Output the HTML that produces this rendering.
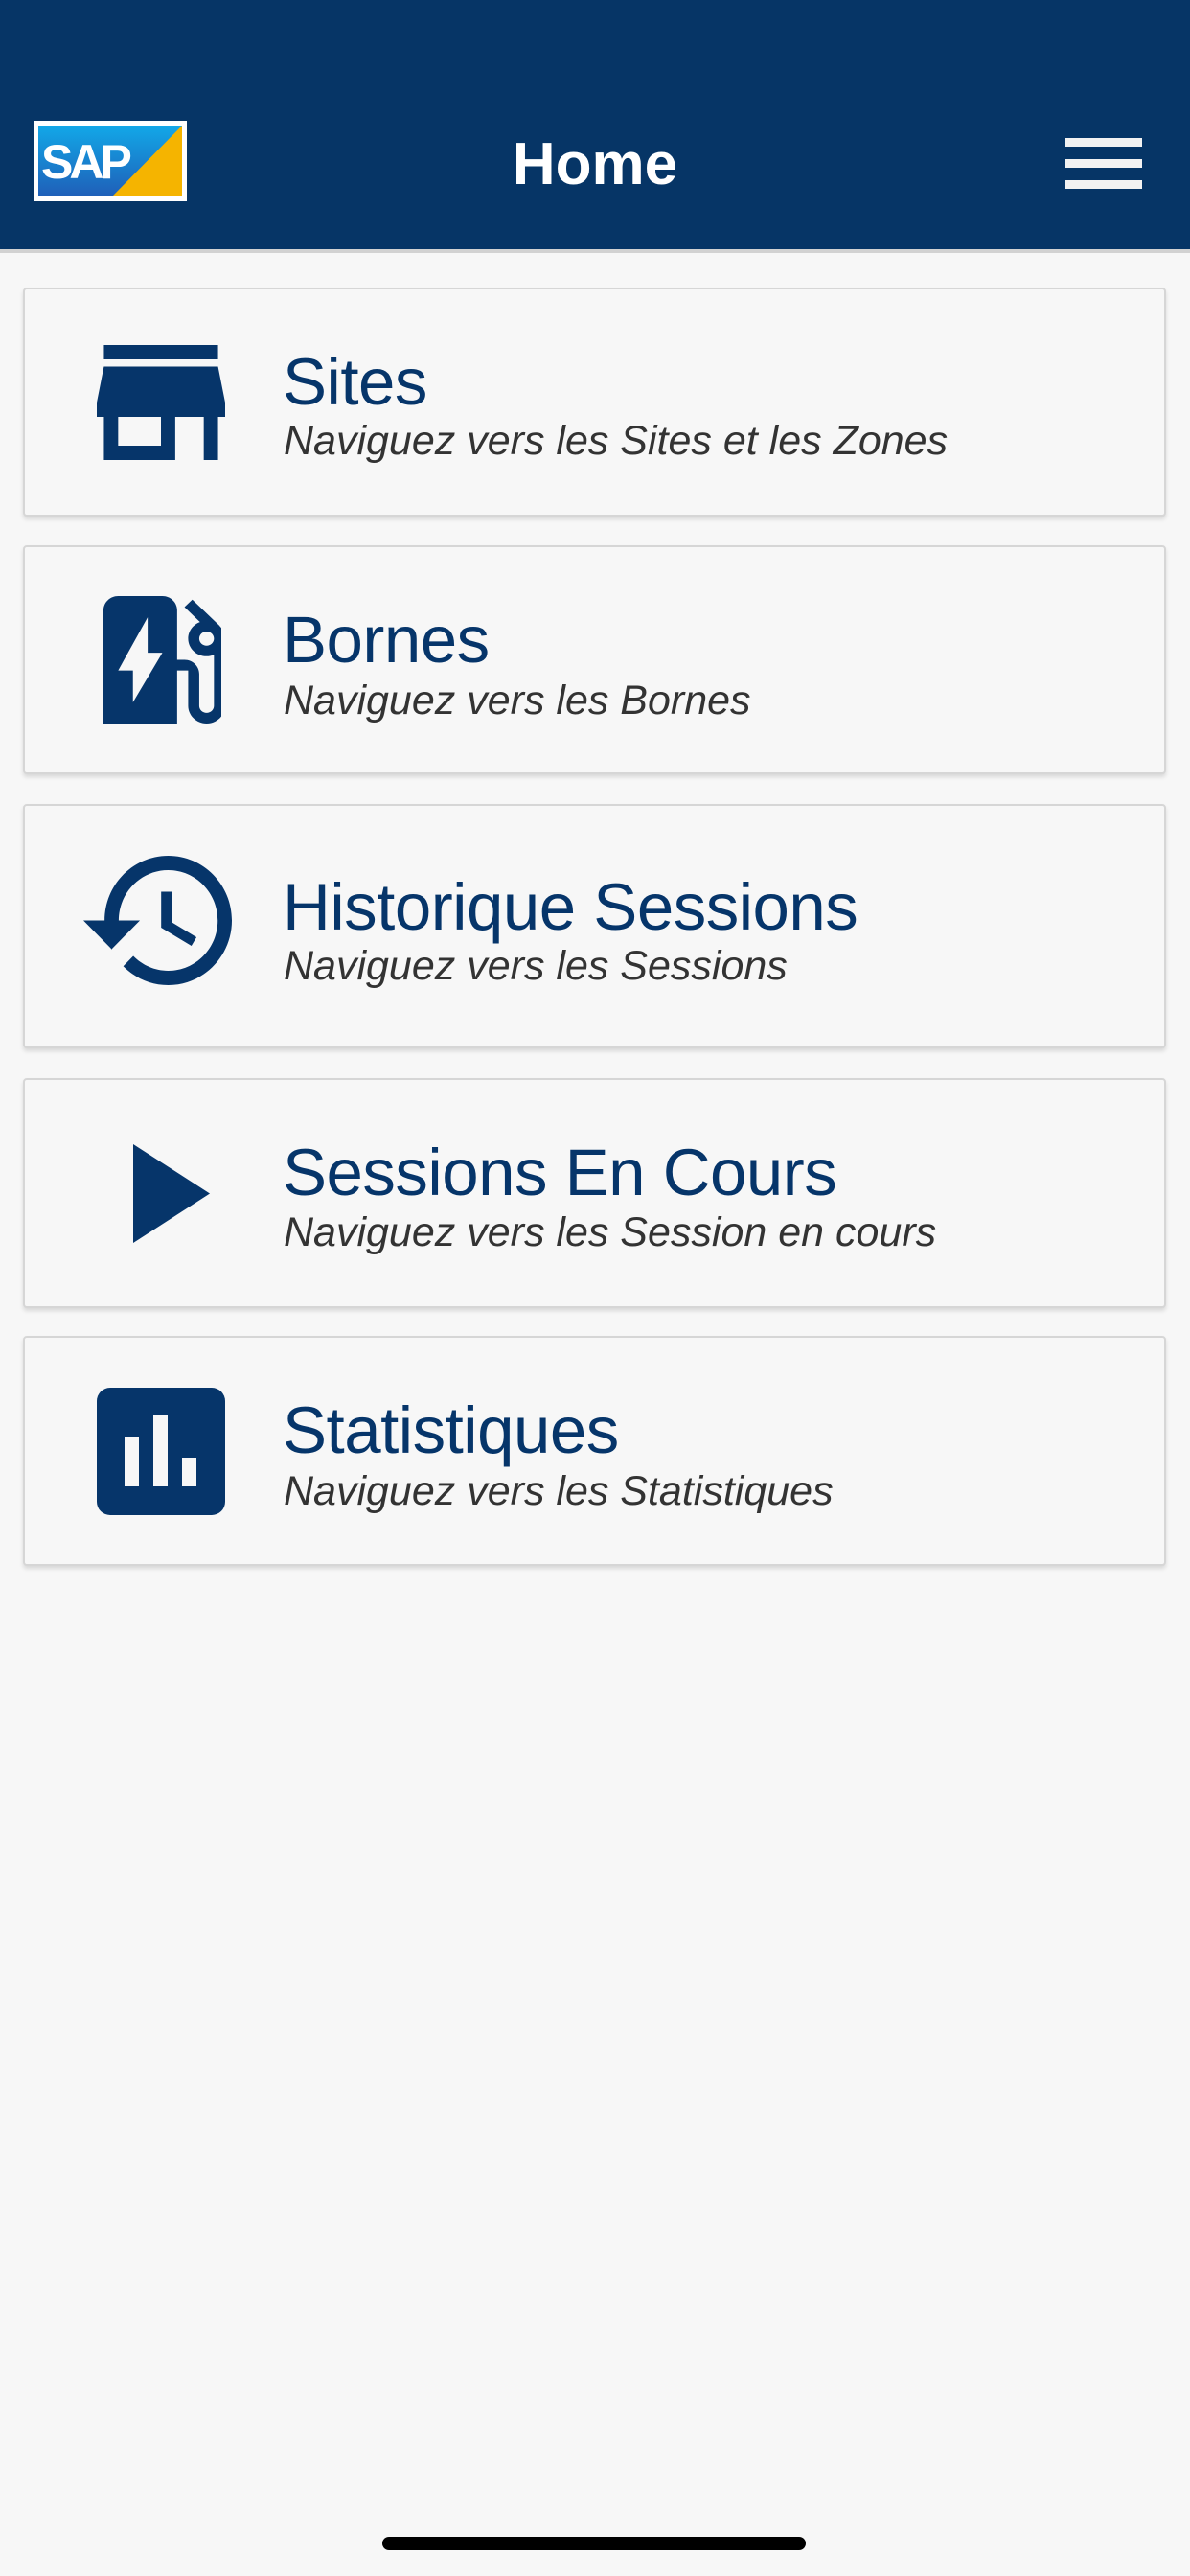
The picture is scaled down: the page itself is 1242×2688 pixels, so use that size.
<!DOCTYPE html>
<html><head><meta charset="utf-8"><style>
*{margin:0;padding:0;box-sizing:border-box}
body{width:1242px;height:2688px;background:#f7f7f7;position:relative;overflow:hidden;font-family:"Liberation Sans",sans-serif}
.hdr{position:absolute;left:0;top:0;width:1242px;height:264px;background:#063566;border-bottom:4px solid #d2d2d2}
.home{position:absolute;left:0;width:1242px;top:132px;text-align:center;color:#fff;font-weight:bold;font-size:62px;line-height:80px}
.bar{position:absolute;left:1112px;width:80px;height:9px;background:#f2f2f2}
.card{position:absolute;left:24px;width:1193px;background:#f7f7f7;border:2px solid #d6d6d6;border-radius:4px;box-shadow:0 3px 4px rgba(0,0,0,.12)}
.t{position:absolute;left:295px;color:#06356a;font-size:69px;letter-spacing:-0.5px;line-height:1;margin-top:-4px}
.s{position:absolute;left:296px;color:#333;font-style:italic;font-size:43px;line-height:1;margin-top:-3px}
svg{position:absolute}
.hi{position:absolute;left:399px;top:2647px;width:442px;height:14px;border-radius:7px;background:#000}
</style></head><body>
<div class="hdr">
 <svg style="left:35px;top:126px" width="160" height="84" viewBox="0 0 160 84">
  <rect width="160" height="84" fill="#fff"/>
  <defs><linearGradient id="g" x1="0" y1="0" x2="0" y2="1"><stop offset="0" stop-color="#12a8e8"/><stop offset="1" stop-color="#1f5fb8"/></linearGradient></defs>
  <rect x="5" y="5" width="150" height="74" fill="url(#g)"/>
  <polygon points="155,5 155,79 82,79" fill="#f5b400"/>
  <text x="8" y="60" fill="#fff" font-family="Liberation Sans" font-weight="bold" font-size="50" letter-spacing="-4">SAP</text>
 </svg>
 <div class="home">Home</div>
 <div class="bar" style="top:144px"></div><div class="bar" style="top:166px"></div><div class="bar" style="top:188px"></div>
</div>

<div class="card" style="top:300px;height:239px"></div>
<svg style="left:101px;top:360px" width="134" height="120" viewBox="3 4 18 16" preserveAspectRatio="none"><path fill="#06356a" d="M20 4H4v2h16V4zm1 10v-2l-1-5H4l-1 5v2h1v6h10v-6h4v6h2v-6h1zm-9 4H6v-4h6v4z"/></svg>
<div class="t" style="top:368px">Sites</div>
<div class="s" style="top:442px">Naviguez vers les Sites et les Zones</div>

<div class="card" style="top:569px;height:239px"></div>
<svg style="left:108px;top:622px" width="123" height="133" viewBox="4 3 16 18" preserveAspectRatio="none"><path fill="#06356a" d="M19.77 7.23l.01-.01-3.72-3.72L15 4.56l2.11 2.11c-.94.36-1.610 1.26-1.61 2.330 0 1.38 1.12 2.5 2.5 2.5.36 0 .69-.08 1-.21v7.21c0 .55-.45 1-1 1s-1-.45-1-1V14c0-1.1-.9-2-2-2h-1V5c0-1.1-.9-2-2-2H6c-1.1 0-2 .9-2 2v16h10v-7.5h1.5v5c0 1.38 1.12 2.5 2.5 2.5s2.5-1.12 2.5-2.5V9c0-.69-.28-1.32-.73-1.77zM18 10c-.55 0-1-.45-1-1s.45-1 1-1 1 .45 1 1-.45 1-1 1zM8 18v-4.5H6L10 6v5h2l-4 7z"/></svg>
<div class="t" style="top:637px">Bornes</div>
<div class="s" style="top:713px">Naviguez vers les Bornes</div>

<div class="card" style="top:839px;height:255px"></div>
<svg style="left:87px;top:893px" width="155" height="135" viewBox="1 3 21 18" preserveAspectRatio="none"><path fill="#06356a" d="M13 3c-4.970 0-9 4.03-9 9H1l3.89 3.89.07.14L9 12H6c0-3.87 3.13-7 7-7s7 3.13 7 7-3.13 7-7 7c-1.93 0-3.68-.79-4.940-2.06l-1.42 1.42C8.27 19.99 10.51 21 13 21c4.97 0 9-4.03 9-9s-4.03-9-9-9zm-1 5v5l4.28 2.54.72-1.21-3.5-2.08V8H12z"/></svg>
<div class="t" style="top:916px">Historique Sessions</div>
<div class="s" style="top:990px">Naviguez vers les Sessions</div>

<div class="card" style="top:1125px;height:240px"></div>
<svg style="left:139px;top:1194px" width="80" height="103" viewBox="0 0 80 103"><polygon points="0,0 80,51.5 0,103" fill="#06356a"/></svg>
<div class="t" style="top:1193px">Sessions En Cours</div>
<div class="s" style="top:1268px">Naviguez vers les Session en cours</div>

<div class="card" style="top:1394px;height:240px"></div>
<svg style="left:101px;top:1448px" width="134" height="133" viewBox="0 0 134 133"><rect width="134" height="133" rx="14" fill="#06356a"/><rect x="29" y="51" width="15" height="52" fill="#f7f7f7"/><rect x="59" y="29" width="15" height="74" fill="#f7f7f7"/><rect x="89" y="73" width="15" height="30" fill="#f7f7f7"/></svg>
<div class="t" style="top:1462px">Statistiques</div>
<div class="s" style="top:1538px">Naviguez vers les Statistiques</div>

<div class="hi"></div>
</body></html>
